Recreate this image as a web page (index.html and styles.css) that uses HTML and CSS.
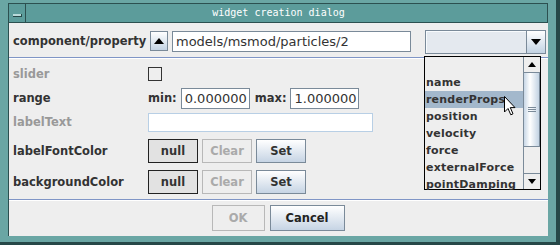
FILE: index.html
```html
<!DOCTYPE html>
<html>
<head>
<meta charset="utf-8">
<title>widget creation dialog</title>
<link rel="stylesheet" href="styles.css">
</head>
<body>
<div class="window">
  <div class="titlebar">
    <div class="menu-btn"><span class="dash"></span></div>
    <div class="title">widget creation dialog</div>
  </div>
  <div class="content">
    <div class="top-row">
      <span class="label comp">component/property</span>
      <span class="arrow-btn">
        <svg width="10" height="6" viewBox="0 0 10 6"><path d="M0 6 L5 0 L10 6 Z" fill="#000"/></svg>
      </span>
      <span class="field path">models/msmod/particles/2</span>
      <span class="combo">
        <span class="combo-display"></span>
        <span class="combo-arrow">
          <svg width="10" height="6" viewBox="0 0 10 6"><path d="M0 0 L10 0 L5 6 Z" fill="#000"/></svg>
        </span>
      </span>
    </div>
    <div class="sep"></div>
    <div class="form">
      <span class="label disabled">slider</span>
      <div class="ctrl"><span class="checkbox"></span></div>

      <span class="label">range</span>
      <div class="ctrl range">
        <span class="label">min:</span><span class="field num">0.000000</span>
        <span class="label">max:</span><span class="field num">1.000000</span>
      </div>

      <span class="label disabled">labelText</span>
      <div class="ctrl"><span class="field text"></span></div>

      <span class="label">labelFontColor</span>
      <div class="ctrl buttons">
        <span class="btn null">null</span><span class="btn off">Clear</span><span class="btn set">Set</span>
      </div>

      <span class="label">backgroundColor</span>
      <div class="ctrl buttons">
        <span class="btn null">null</span><span class="btn off">Clear</span><span class="btn set">Set</span>
      </div>
    </div>
    <div class="sep"></div>
    <div class="actions">
      <span class="btn off ok">OK</span>
      <span class="btn set cancel">Cancel</span>
    </div>
  </div>

  <div class="popup">
    <ul class="items">
      <li></li>
      <li>name</li>
      <li class="sel">renderProps</li>
      <li>position</li>
      <li>velocity</li>
      <li>force</li>
      <li>externalForce</li>
      <li>pointDamping</li>
    </ul>
    <div class="scrollbar">
      <span class="sb-btn"><svg width="8" height="5" viewBox="0 0 8 5"><path d="M0 5 L4 0 L8 5 Z" fill="#000"/></svg></span>
      <span class="thumb"><span class="grip"></span></span>
      <span class="track"></span>
      <span class="sb-btn"><svg width="8" height="5" viewBox="0 0 8 5"><path d="M0 0 L8 0 L4 5 Z" fill="#000"/></svg></span>
    </div>
  </div>

  <svg class="cursor" width="13" height="20" viewBox="0 0 13 20">
    <path d="M0.5 0.5 L0.5 16 L4 12.5 L6.8 18.8 L9 17.8 L6.3 11.6 L11 11.6 Z" fill="#fff" stroke="#000" stroke-width="1"/>
  </svg>
</div>
</body>
</html>
```

FILE: styles.css
```css
body{
    margin: 0;
    background: #64a3a1;
}
.window{
    position: relative;
    width: 560px;
    height: 245px;
    box-sizing: border-box;
    padding: 3px 8px 0 8px;
    background: #6aa6a4;
    border-right: 4px solid #264848;
    border-bottom: 3px solid #264848;
    font-family: "DejaVu Sans", sans-serif;
}
.titlebar{
    display: flex;
    height: 20px;
    box-sizing: border-box;
    background: #5c9c9b;
    border: 1px solid #2c5050;
}
.menu-btn{
    width: 16px;
    border-right: 1px solid #2c5050;
    position: relative;
}
.dash{
    position: absolute;
    left: 4px;
    top: 10px;
    width: 8px;
    height: 2px;
    background: #b8dada;
    border-right: 1px solid #264848;
    border-bottom: 1px solid #264848;
}
.title{
    flex: 1;
    text-align: center;
    color: #fff;
    font: 10px "DejaVu Sans Mono", monospace;
    line-height: 18px;
    padding-right: 16px;
}
.content{
    height: 213px;
    box-sizing: border-box;
    background: #eeeeee;
    border-left: 1px solid #2c5050;
    display: flex;
    flex-direction: column;
}
.label{
    font-weight: bold;
    font-size: 11.5px;
    color: #333;
}
.label.disabled{
    color: #999;
}
.top-row{
    height: 34px;
    display: flex;
    align-items: center;
    padding: 2px 0 0 4px;
    box-sizing: border-box;
}
.comp{
    width: 137px;
}
.arrow-btn{
    width: 18px;
    height: 20px;
    box-sizing: border-box;
    border: 1px solid #7a8a99;
    background: linear-gradient(#ffffff, #c3d3e3);
    display: flex;
    align-items: center;
    justify-content: center;
    margin-right: 4px;
}
.field{
    display: inline-block;
    box-sizing: border-box;
    background: #fff;
    border: 1px solid #7a8a99;
    font-size: 13px;
    color: #333;
    padding-left: 3px;
    white-space: nowrap;
}
.path{
    width: 239px;
    height: 21px;
    line-height: 19px;
}
.combo{
    display: flex;
    margin-left: 14px;
    width: 121px;
    height: 24px;
    margin-top: 2px;
}
.combo-display{
    flex: 1;
    box-sizing: border-box;
    border: 1px solid #7a8a99;
    border-right: none;
    background: #e4e9ef;
    box-shadow: inset 1px 1px 0 #f8fbfd;
}
.combo-arrow{
    width: 20px;
    box-sizing: border-box;
    border: 1px solid #7a8a99;
    background: linear-gradient(#ffffff, #c3d3e3);
    display: flex;
    align-items: center;
    justify-content: center;
}
.sep{
    height: 1px;
    background: #7f95c6;
    box-shadow: 0 1px 0 #fff;
}
.form{
    display: grid;
    grid-template-columns: 135px 1fr;
    grid-template-rows: 24px 24px 24px 34px 28px;
    align-items: center;
    padding: 4px 0 3px 4px;
}
.ctrl{
    display: flex;
    align-items: center;
}
.checkbox{
    width: 12px;
    height: 12px;
    border: 1px solid #333;
}
.range .label{
    margin-right: 4px;
}
.num{
    width: 69px;
    height: 21px;
    line-height: 19px;
    margin-right: 5px;
}
.text{
    width: 225px;
    height: 19px;
    border-color: #b8cfe5;
}
.buttons{
    gap: 4px;
}
.btn{
    box-sizing: border-box;
    width: 50px;
    height: 24px;
    display: flex;
    align-items: center;
    justify-content: center;
    font-weight: bold;
    font-size: 11.5px;
    color: #333;
    border: 1px solid #7a8a99;
}
.null{
    background: #e2e2e2;
    border-color: #222;
}
.off{
    color: #aaa;
    border-color: #b8b8b8;
}
.set{
    background: linear-gradient(#ffffff, #c6d4e4);
}
.actions{
    flex: 1;
    display: flex;
    align-items: center;
    justify-content: center;
    gap: 5px;
    padding-right: 1px;
}
.ok{
    width: 53px;
    height: 26px;
}
.cancel{
    width: 75px;
    height: 26px;
    color: #222;
}
.popup{
    position: absolute;
    left: 424px;
    top: 56px;
    width: 117px;
    height: 134px;
    box-sizing: border-box;
    border: 1px solid #000;
    background: #eeeeee;
    display: flex;
}
.items{
    flex: 1;
    list-style: none;
    margin: 0;
    padding: 0;
}
.items li{
    height: 17px;
    line-height: 17px;
    font-weight: bold;
    font-size: 11px;
    letter-spacing: 0.2px;
    color: #333;
    padding-left: 1px;
}
.items li.sel{
    background: #a3b8cc;
}
.scrollbar{
    width: 16px;
    display: flex;
    flex-direction: column;
    border-left: 1px solid #7a8a99;
}
.sb-btn{
    height: 16px;
    box-sizing: border-box;
    border-bottom: 1px solid #7a8a99;
    display: flex;
    align-items: center;
    justify-content: center;
    background: #eeeeee;
}
.sb-btn:last-child{
    border-bottom: none;
    border-top: 1px solid #7a8a99;
}
.thumb{
    height: 74px;
    box-sizing: border-box;
    border: 1px solid #7a8a99;
    border-left: none;
    border-top: none;
    background: linear-gradient(90deg, #c8d7e6, #ffffff 40%, #c3d3e3);
    display: flex;
    align-items: center;
    justify-content: center;
}
.grip{
    width: 8px;
    height: 5px;
    background: repeating-linear-gradient(#7a8a99 0 1px, transparent 1px 2px);
}
.track{
    flex: 1;
}
.cursor{
    position: absolute;
    left: 504px;
    top: 96px;
}
```
